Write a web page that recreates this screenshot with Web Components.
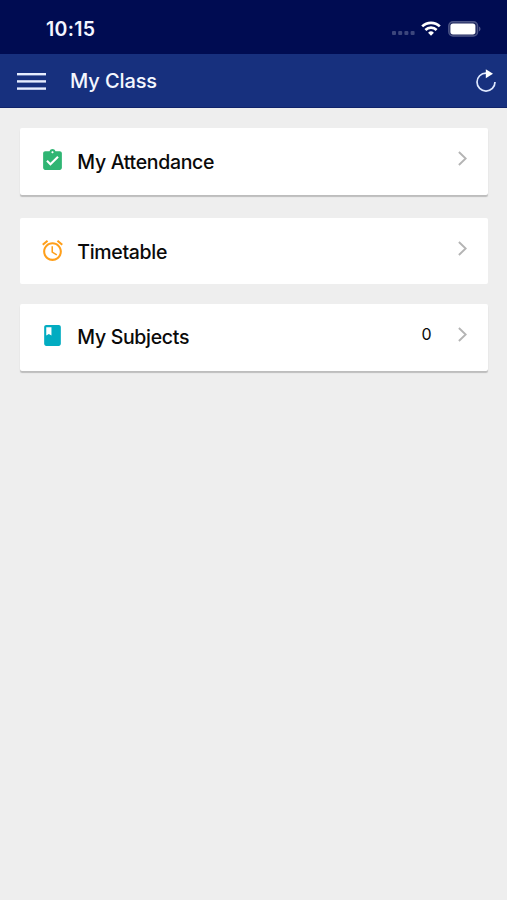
<!DOCTYPE html>
<html lang="en">
<head>
<meta charset="utf-8">
<title>My Class</title>
<style>
  body {
    margin: 0;
    background: #eeeeee;
    font-family: Inter, "Liberation Sans", sans-serif;
  }
</style>
</head>
<body>
<class-app></class-app>

<script>
const ICONS = {
  attendance: `<path d="M19 3h-4.18C14.4 1.84 13.3 1 12 1c-1.3 0-2.4.84-2.82 2H5c-1.1 0-2 .9-2 2v14c0 1.1.9 2 2 2h14c1.1 0 2-.9 2-2V5c0-1.1-.9-2-2-2zm-7 0c.55 0 1 .45 1 1s-.45 1-1 1-1-.45-1-1 .45-1 1-1zm-2 14l-4-4 1.41-1.41L10 14.17l6.59-6.59L18 9l-8 8z"/>`,
  alarm: `<path d="M22 5.72l-4.6-3.86-1.29 1.53 4.6 3.86L22 5.72zM7.88 3.39L6.6 1.86 2 5.71l1.29 1.53 4.59-3.85zM12.5 8H11v6l4.75 2.85.75-1.23-4-2.37V8zM12 4c-4.97 0-9 4.03-9 9s4.02 9 9 9c4.97 0 9-4.03 9-9s-4.03-9-9-9zm0 16c-3.87 0-7-3.13-7-7s3.13-7 7-7 7 3.13 7 7-3.13 7-7 7z"/>`,
  book: `<path d="M18 2H6c-1.1 0-2 .9-2 2v16c0 1.1.9 2 2 2h12c1.1 0 2-.9 2-2V4c0-1.1-.9-2-2-2zM6 4h5v8l-2.5-1.5L6 12V4z"/>`
};

/**
 * Phone status bar: clock, signal, wifi and battery.
 */
class StatusBar extends HTMLElement {
  static get styles() {
    return `
      <style>
        :host {
          display: flex;
          align-items: center;
          box-sizing: border-box;
          height: 54px;
          padding: 3px 26px 0 46px;
          background: #000c52;
          color: #f4f6ff;
        }
        .time {
          flex: 1;
          margin-top: 1px;
          font-size: 19.5px;
          font-weight: 600;
          line-height: 24px;
          letter-spacing: 0.3px;
        }
        svg { display: block; }
        .signal { margin: 9px 6px 0 0; }
        .wifi { margin-right: 7px; }
      </style>
    `;
  }

  static get markup() {
    return `
      <div class="time"><slot></slot></div>
      <svg class="signal" width="23" height="4" fill="#3c467c">
        <rect x="0" width="4" height="4" rx="1"/>
        <rect x="6.2" width="4" height="4" rx="1"/>
        <rect x="12.4" width="4" height="4" rx="1"/>
        <rect x="18.6" width="4" height="4" rx="1"/>
      </svg>
      <svg class="wifi" width="20" height="15" viewBox="0 0 20 15" fill="none" stroke="#fff" stroke-width="2.7">
        <path d="M1.2 5.4a12.6 12.6 0 0 1 17.6 0"/>
        <path d="M4.4 9a8 8 0 0 1 11.2 0"/>
        <path d="M10 14.7l-2.9-3a4.2 4.2 0 0 1 5.8 0z" fill="#fff" stroke="none"/>
      </svg>
      <svg width="33" height="16" viewBox="0 0 33 16">
        <rect x=".8" y=".8" width="28.8" height="14.2" rx="4.2" fill="#20295f" stroke="#4d5687" stroke-width="1.4"/>
        <rect x="2.4" y="2.4" width="25" height="11" rx="2.6" fill="#fff"/>
        <path d="M31 5.5c2 .8 2 4 0 4.8z" fill="#4d5687"/>
      </svg>
    `;
  }

  constructor() {
    super();
    const template = document.createElement("template");

    template.innerHTML = this.constructor.styles + this.constructor.markup;
    this.attachShadow({ mode: "open" });
    this.shadowRoot.appendChild(template.content.cloneNode(true));
  }
}

/**
 * Title bar with the menu and refresh buttons.
 */
class NavBar extends HTMLElement {
  static get styles() {
    return `
      <style>
        :host {
          display: flex;
          align-items: center;
          box-sizing: border-box;
          height: 54px;
          padding: 0 10px 0 17px;
          background: #17307e;
          border-bottom: 1px solid #10236a;
          color: #f4f7ff;
        }
        button {
          padding: 0;
          border: none;
          background: none;
          cursor: pointer;
        }
        svg { display: block; }
        #menu { margin-top: 3px; }
        .title {
          flex: 1;
          margin: 1px 0 0 24px;
          font-size: 20px;
          font-weight: 500;
          line-height: 24px;
          letter-spacing: -0.1px;
        }
      </style>
    `;
  }

  static get markup() {
    return `
      <button id="menu" aria-label="Menu">
        <svg width="29" height="18" fill="#e6edff">
          <rect y="0" width="29" height="2.4"/>
          <rect y="7.2" width="29" height="2.4"/>
          <rect y="14.4" width="29" height="2.4"/>
        </svg>
      </button>
      <div class="title"><slot></slot></div>
      <button id="refresh" aria-label="Refresh">
        <svg width="22" height="24" viewBox="0 0 22 24">
          <path d="M12 4.1h-1A9 9 0 1 0 20 13.1" fill="none" stroke="#dfe9ff" stroke-width="1.7"/>
          <path d="M10.8.3l7.2 4.4-7.2 4.5z" fill="#fff"/>
        </svg>
      </button>
    `;
  }

  constructor() {
    super();
    const template = document.createElement("template");

    template.innerHTML = this.constructor.styles + this.constructor.markup;
    this.attachShadow({ mode: "open" });
    this.shadowRoot.appendChild(template.content.cloneNode(true));
  }
}

/**
 * One card of the menu. Takes icon, color and count attributes.
 */
class MenuCard extends HTMLElement {
  static get styles() {
    return `
      <style>
        :host {
          display: flex;
          align-items: flex-start;
          box-sizing: border-box;
          height: 67px;
          padding: 19.5px 20.5px 0 19.5px;
          background: #fff;
          border-radius: 2px;
          box-shadow: 0 2px 1px #bdbdbd;
          color: #0a0a0a;
        }
        :host([flat]) {
          height: 66px;
          box-shadow: none;
        }
        svg { display: block; }
        .label {
          flex: 1;
          margin: 2px 0 0 12.5px;
          font-size: 19.5px;
          font-weight: 500;
          line-height: 24px;
          letter-spacing: -0.32px;
        }
        .count {
          margin: 1px 26.5px 0 0;
          font-size: 16px;
          line-height: 20px;
        }
        .arrow { margin-top: 3.5px; }
      </style>
    `;
  }

  static get markup() {
    return `
      <svg id="icon" width="25" height="25" viewBox="0 0 24 24"></svg>
      <div class="label"><slot></slot></div>
      <div class="count"></div>
      <svg class="arrow" width="9" height="15" viewBox="0 0 9 15" fill="none" stroke="#b4b4b4" stroke-width="1.9">
        <path d="M.9 1l6.8 6.5L.9 14"/>
      </svg>
    `;
  }

  constructor() {
    super();
    const template = document.createElement("template");

    template.innerHTML = this.constructor.styles + this.constructor.markup;
    this.attachShadow({ mode: "open" });
    this.shadowRoot.appendChild(template.content.cloneNode(true));
    this.icon = this.shadowRoot.querySelector("#icon");
    this.count = this.shadowRoot.querySelector(".count");
  }

  connectedCallback() {
    this.icon.innerHTML = ICONS[this.getAttribute("icon")];
    this.icon.style.fill = this.getAttribute("color");
    this.count.textContent = this.getAttribute("count") || "";
  }
}

/**
 * The whole screen.
 */
class ClassApp extends HTMLElement {
  static get styles() {
    return `
      <style>
        :host {
          display: block;
          min-height: 900px;
          background: #eeeeee;
        }
        main {
          display: flex;
          flex-direction: column;
          padding: 20px 19.5px 0 20.3px;
        }
        menu-card + menu-card { margin-top: 23.4px; }
        menu-card[flat] + menu-card { margin-top: 19.6px; }
      </style>
    `;
  }

  static get markup() {
    return `
      <status-bar>10:15</status-bar>
      <nav-bar>My Class</nav-bar>
      <main>
        <menu-card icon="attendance" color="#2fb573">My Attendance</menu-card>
        <menu-card icon="alarm" color="#ff9f1a" flat>Timetable</menu-card>
        <menu-card icon="book" color="#02acc1" count="0">My Subjects</menu-card>
      </main>
    `;
  }

  constructor() {
    super();
    const template = document.createElement("template");

    template.innerHTML = this.constructor.styles + this.constructor.markup;
    this.attachShadow({ mode: "open" });
    this.shadowRoot.appendChild(template.content.cloneNode(true));
  }
}

customElements.define("status-bar", StatusBar);
customElements.define("nav-bar", NavBar);
customElements.define("menu-card", MenuCard);
customElements.define("class-app", ClassApp);
</script>
</body>
</html>
